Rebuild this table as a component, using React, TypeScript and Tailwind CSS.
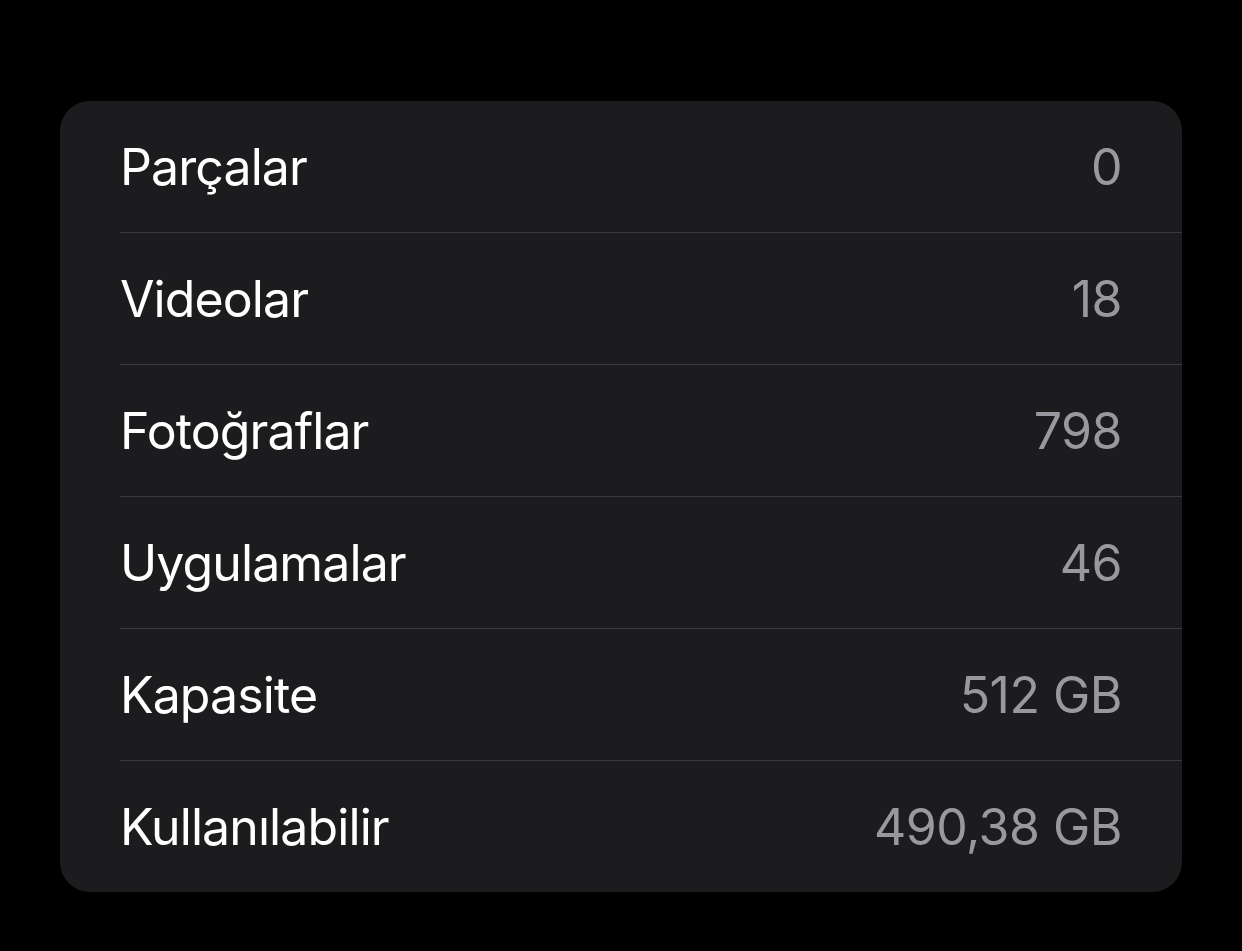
const rows: { label: string; value: string }[] = [
  { label: "Parçalar", value: "0" },
  { label: "Videolar", value: "18" },
  { label: "Fotoğraflar", value: "798" },
  { label: "Uygulamalar", value: "46" },
  { label: "Kapasite", value: "512 GB" },
  { label: "Kullanılabilir", value: "490,38 GB" },
];

export default function App() {
  return (
    <div
      className="min-h-[951px] w-full bg-black pt-[101px] pl-[60px] pr-[60px]"
      style={{ fontFamily: "Inter, 'Noto Sans', sans-serif" }}
    >
      <div className="w-[1122px] overflow-hidden rounded-[30px] bg-[#1c1c1e]">
        {rows.map((row, i) => (
          <div key={row.label} className="pl-[60px]">
            {i > 0 && <div className="h-px bg-[#3a3a3c]" />}
            <div className="flex h-[131px] items-center justify-between pr-[60px]">
              <span className="text-[50px] leading-none tracking-[-0.9px] text-white">{row.label}</span>
              <span className="text-[50px] leading-none tracking-[-0.5px] text-[#98989f]">{row.value}</span>
            </div>
          </div>
        ))}
      </div>
    </div>
  );
}
